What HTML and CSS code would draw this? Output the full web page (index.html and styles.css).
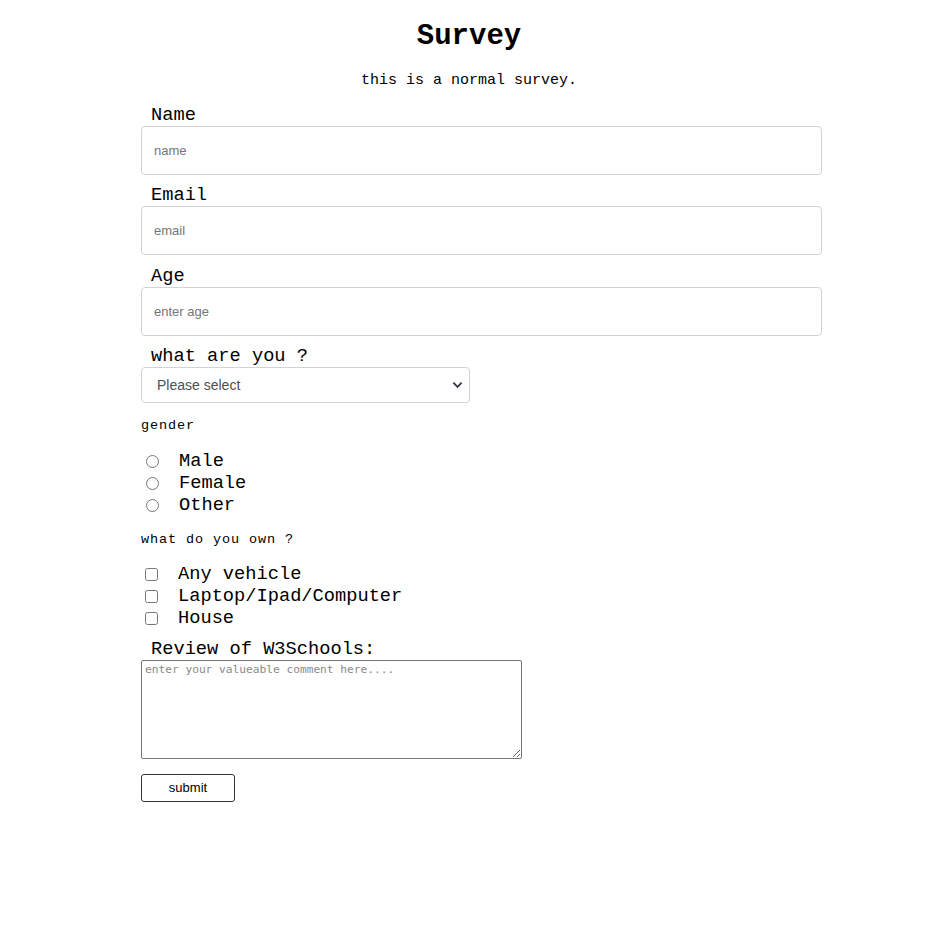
FILE: index.html
```html
<!DOCTYPE html>
<html lang="en">
<head>
<meta charset="utf-8">
<title>Survey</title>
<link rel="stylesheet" href="styles.css">
</head>
<body>
<h1 class="title">Survey</h1>
<p class="intro">this is a normal survey.</p>
<form class="survey">
  <div class="field">
    <label class="label" for="name">Name</label>
    <input class="text-input" id="name" type="text" placeholder="name">
  </div>
  <div class="field">
    <label class="label" for="email">Email</label>
    <input class="text-input" id="email" type="email" placeholder="email">
  </div>
  <div class="field">
    <label class="label" for="age">Age</label>
    <input class="text-input" id="age" type="number" placeholder="enter age">
  </div>
  <div class="field">
    <label class="label" for="what">what are you ?</label>
    <select class="select" id="what">
      <option>Please select</option>
      <option>Student</option>
      <option>Worker</option>
    </select>
  </div>
  <p class="group-title">gender</p>
  <div class="options">
    <label class="option"><input class="radio" type="radio" name="gender"><span>Male</span></label>
    <label class="option"><input class="radio" type="radio" name="gender"><span>Female</span></label>
    <label class="option"><input class="radio" type="radio" name="gender"><span>Other</span></label>
  </div>
  <p class="group-title">what do you own ?</p>
  <div class="options options-own">
    <label class="option"><input class="check" type="checkbox"><span>Any vehicle</span></label>
    <label class="option"><input class="check" type="checkbox"><span>Laptop/Ipad/Computer</span></label>
    <label class="option"><input class="check" type="checkbox"><span>House</span></label>
  </div>
  <div class="field review">
    <label class="label" for="review">Review of W3Schools:</label>
    <textarea class="textarea" id="review" placeholder="enter your valueable comment here...."></textarea>
  </div>
  <button class="submit" type="submit">submit</button>
</form>
</body>
</html>
```
FILE: styles.css
```css
* { box-sizing: border-box; }
body {
  margin: 0;
  padding: 20px 0 40px;
  font-family: "Liberation Mono", "Courier New", monospace;
  color: #000;
  background: #fff;
}
.title {
  margin: 0;
  text-align: center;
  font-size: 29px;
  line-height: 34px;
  font-weight: bold;
}
.intro {
  margin: 18px 0 0;
  text-align: center;
  font-size: 15px;
  line-height: 18px;
}
.survey {
  width: 681px;
  margin: 13px 0 0 141px;
  display: flex;
  flex-direction: column;
  align-items: flex-start;
}
.field {
  display: flex;
  flex-direction: column;
  align-items: flex-start;
  width: 100%;
  margin-bottom: 8.33px;
}
.label {
  padding-left: 10px;
  padding-top: 1px;
  font-size: 18.7px;
  line-height: 22px;
}
.text-input {
  width: 100%;
  height: 49px;
  border: 1px solid #ced4da;
  border-radius: 4px;
  padding: 0 12px;
  font-family: "Liberation Sans", Arial, sans-serif;
  font-size: 13px;
  color: #333;
  outline: none;
}
.text-input::placeholder { color: #757575; }
.select {
  width: 329px;
  height: 36px;
  border: 1px solid #ced4da;
  border-radius: 4px;
  padding: 0 15px;
  font-family: "Liberation Sans", Arial, sans-serif;
  font-size: 14px;
  color: #495057;
  background: #fff url("data:image/svg+xml,%3Csvg xmlns='http://www.w3.org/2000/svg' width='12' height='8' viewBox='0 0 12 8'%3E%3Cpath d='M1.5 1.5 6 6l4.5-4.5' fill='none' stroke='%23343a40' stroke-width='2'/%3E%3C/svg%3E") no-repeat right 6px center / 11px 8px;
  -webkit-appearance: none;
  appearance: none;
  margin-bottom: 6px;
}
.group-title {
  margin: 0;
  font-size: 13.5px;
  letter-spacing: 0.9px;
  line-height: 18px;
}
.options {
  display: flex;
  flex-direction: column;
  margin: 15px 0 15px;
}
.options-own { margin-top: 14px; }
.option {
  display: flex;
  align-items: center;
  height: 22px;
  font-size: 18.7px;
}
.radio {
  width: 13px;
  height: 13px;
  margin: 0 20px 0 5px;
}
.check {
  width: 13px;
  height: 13px;
  margin: 0 20px 0 4px;
}
.review { margin-top: -7px; }
.textarea {
  width: 381px;
  height: 99px;
  border: 1px solid #767676;
  border-radius: 2px;
  padding: 2px 3px;
  font-family: "DejaVu Sans Mono", monospace;
  font-size: 11.2px;
  resize: both;
}
.textarea::placeholder { color: #8a8a8a; }
.submit {
  margin-top: 6px;
  width: 94px;
  height: 28px;
  border: 1px solid #333;
  border-radius: 3px;
  background: #fff;
  font-family: "Liberation Sans", Arial, sans-serif;
  font-size: 13px;
  color: #000;
}
```
